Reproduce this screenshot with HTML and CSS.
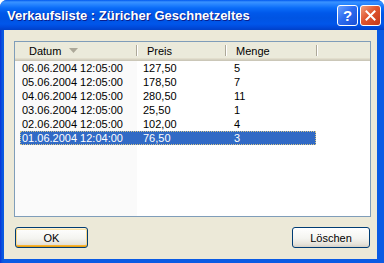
FILE: index.html
```html
<!DOCTYPE html>
<html lang="de">

<head>
    <meta charset="UTF-8">
    <title>Verkaufsliste</title>
    <link rel="stylesheet" href="styles.css">
</head>

<body>
    <div class="window">
        <div class="titlebar">
            <span class="title">Verkaufsliste : Züricher Geschnetzeltes</span>
            <div class="caption-buttons">
                <span class="cbtn help">?</span>
                <span class="cbtn close">
                    <svg width="11" height="11" viewBox="0 0 11 11">
                        <path d="M1.5 1.5 L9.5 9.5 M9.5 1.5 L1.5 9.5" stroke="#fff" stroke-width="2" stroke-linecap="square" />
                    </svg>
                </span>
            </div>
        </div>

        <div class="client">
            <div class="listview">
                <div class="header">
                    <div class="col first">Datum
                        <svg class="sort" width="9" height="5" viewBox="0 0 9 5">
                            <path d="M0 0 H9 L4.5 5 Z" fill="#ACA899" />
                        </svg>
                    </div>
                    <div class="col">Preis</div>
                    <div class="col">Menge</div>
                    <div class="col last"></div>
                </div>
                <div class="body">
                    <div class="row"><span>06.06.2004 12:05:00</span><span>127,50</span><span>5</span></div>
                    <div class="row"><span>05.06.2004 12:05:00</span><span>178,50</span><span>7</span></div>
                    <div class="row"><span>04.06.2004 12:05:00</span><span>280,50</span><span>11</span></div>
                    <div class="row"><span>03.06.2004 12:05:00</span><span>25,50</span><span>1</span></div>
                    <div class="row"><span>02.06.2004 12:05:00</span><span>102,00</span><span>4</span></div>
                    <div class="row selected"><span>01.06.2004 12:04:00</span><span>76,50</span><span>3</span></div>
                </div>
            </div>

            <div class="buttons">
                <button class="btn default" type="button">OK</button>
                <button class="btn wide" type="button">Löschen</button>
            </div>
        </div>
    </div>
</body>

</html>
```

FILE: styles.css
```css
body {
    margin: 0;
    padding: 0;
    background: #fff;
    font-family: "Liberation Sans", Arial, sans-serif;
    font-size: 11px;
}

.window {
    width: 384px;
    height: 263px;
    display: flex;
    flex-direction: column;
    background: linear-gradient(to right, #0831D9, #0855DD 2px, #0A5BE4 4px);
    border-radius: 7px 7px 0 0;
}

.titlebar {
    height: 30px;
    display: flex;
    align-items: center;
    padding: 0 3px 0 7px;
    border-radius: 7px 7px 0 0;
    background: linear-gradient(to bottom, #0058EE 0, #3A93FF 2px, #2A87FF 4px, #0A6CF8 8px, #0058EA 13px, #0054E3 18px, #0056EA 24px, #004BDD 27px, #0040C8 30px);
}

.title {
    flex: 1;
    color: #fff;
    font-weight: bold;
    font-size: 13px;
    margin-top: 1px;
    text-shadow: 1px 1px #0A1E8C;
    white-space: nowrap;
}

.caption-buttons {
    display: flex;
    gap: 2px;
    margin-top: 1px;
}

.cbtn {
    width: 21px;
    height: 21px;
    box-sizing: border-box;
    border: 1px solid #fff;
    border-radius: 3px;
    display: flex;
    align-items: center;
    justify-content: center;
}

.help {
    background: linear-gradient(135deg, #6CA2FF, #2D6CF0 45%, #1A4FD6);
    color: #fff;
    font-weight: bold;
    font-size: 15px;
}

.close {
    background: linear-gradient(135deg, #F0A07E, #E0552E 45%, #C4381A);
}

.client {
    flex: 1;
    margin: 0 7px 4px 4px;
    padding: 11px 6px 0 10px;
    background: #ECE9D8;
    display: flex;
    flex-direction: column;
}

.listview {
    height: 176px;
    box-sizing: border-box;
    border: 1px solid #7F9DB9;
    background: #fff;
    display: flex;
    flex-direction: column;
}

.header {
    height: 19px;
    display: grid;
    grid-template-columns: 122px 89px 91px 1fr;
    background: #EBEADB;
    box-shadow: inset 0 -1px #CBC7B8, inset 0 -2px #D6D2C2, inset 0 -3px #E2DECD;
}

.col {
    position: relative;
    display: flex;
    align-items: center;
    padding: 0 0 2px 10px;
}

.col.first {
    padding-left: 14px;
}

.col::after {
    content: "";
    position: absolute;
    right: 0;
    top: 3px;
    bottom: 5px;
    width: 1px;
    background: #ACA899;
    box-shadow: 1px 0 #fff;
}

.col.last::after {
    display: none;
}

.sort {
    margin-left: 8px;
}

.body {
    flex: 1;
    padding-left: 5px;
    background: linear-gradient(to right, #FAFAFA 122px, #fff 122px);
}

.row {
    width: 296px;
    height: 14px;
    line-height: 14px;
    box-sizing: border-box;
    padding-left: 2px;
    display: grid;
    grid-template-columns: 121px 91px 82px;
    color: #000;
}

.row.selected {
    background: #316AC5;
    color: #fff;
    outline: 1px dotted #D6C68A;
    outline-offset: -1px;
}

.buttons {
    display: flex;
    justify-content: space-between;
    margin-top: 10px;
    padding: 0 1px;
}

.btn {
    width: 73px;
    height: 21px;
    border: 1px solid #003C74;
    border-radius: 3px;
    background: linear-gradient(#FFFFFF, #F4F4F0 55%, #E6E3DA 85%, #D6D0C5);
    font-family: "Liberation Sans", Arial, sans-serif;
    font-size: 11px;
    color: #000;
    padding: 0;
}

.btn.wide {
    width: 78px;
}

.btn.default {
    box-shadow: inset 0 1px #FFF0CF, inset 0 -1px #E5A01A, inset 1px 0 #FBD88A, inset -1px 0 #FBD88A, inset 0 2px #F9E3A8, inset 0 -2px #F8B330;
}
```
